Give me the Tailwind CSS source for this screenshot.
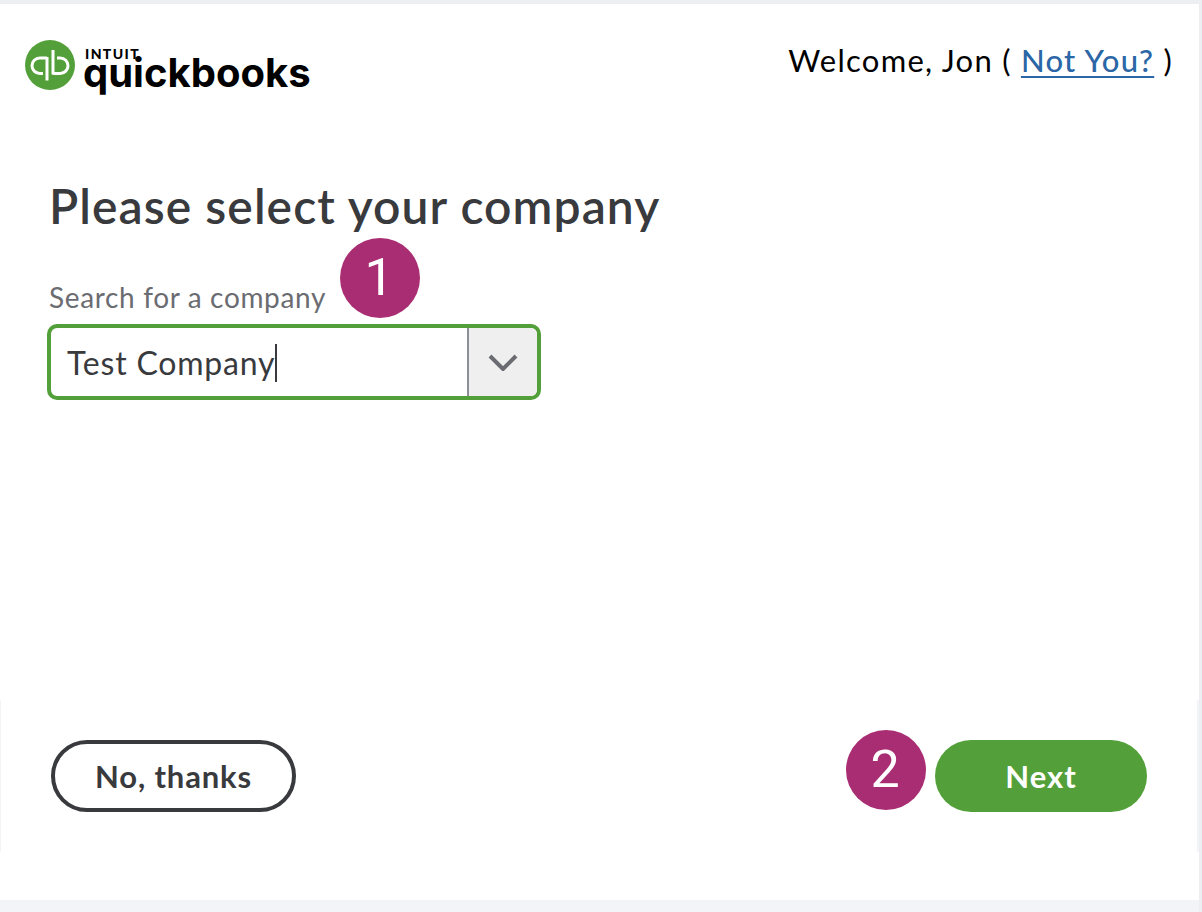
<!DOCTYPE html>
<html lang="en">
<head>
  <meta charset="UTF-8">
  <title>Select company</title>
  <script src="https://cdn.jsdelivr.net/npm/@tailwindcss/browser@4"></script>
</head>
<body class="bg-[#f3f4f8] h-[912px] overflow-hidden border-t-[4px] border-r-[3px] border-[#eceef2] font-['Lato',sans-serif]">
  <main class="relative bg-white h-[896px] flex flex-col">

    <!-- Header -->
    <header class="flex justify-between h-[100px]">
      <div class="flex ml-[25px] mt-[36px] h-[60px]">
        <svg width="50" height="50" viewBox="0 0 50 50" class="shrink-0">
          <circle cx="25" cy="25" r="25" fill="#53a03a"/>
          <path d="M22 18h-7.300a7.700 7.700 0 0 0 0 15.400h3.300" fill="none" stroke="#fff" stroke-width="3"/>
          <path d="M22 17v23.500" fill="none" stroke="#fff" stroke-width="3"/>
          <path d="M28 33.400h7.300a7.700 7.700 0 0 0 0-15.400h-3.300" fill="none" stroke="#fff" stroke-width="3"/>
          <path d="M28 10v24.500" fill="none" stroke="#fff" stroke-width="3"/>
        </svg>
        <div class="ml-[8px] text-black">
          <div class="text-[14px] leading-[11px] font-black tracking-[1.4px] ml-[2px] mt-[8px]">INTUIT</div>
          <div class="font-['Inter'] text-[40px] leading-[34px] font-bold -mt-[3px]">quickbooks</div>
        </div>
      </div>
      <p class="mt-[37px] mr-[26px] text-[31px] leading-[38px] text-black tracking-[1.27px]">
        Welcome, Jon ( <a href="#" class="text-[#2b66a6] underline underline-offset-[4px] decoration-2 font-medium">Not You?</a> )
      </p>
    </header>

    <!-- Form -->
    <section class="ml-[49px] mt-[72px] flex-1">
      <h1 class="text-[48px] leading-[60px] font-semibold text-[#393a3d] tracking-[1.07px]">Please select your company</h1>
      <label class="block mt-[41px] text-[28px] leading-[40px] text-[#6b6c72] tracking-[0.65px]">Search for a company</label>
      <div class="flex mt-[7px] w-[494px] h-[76px] border-[4px] border-[#53a03a] rounded-[10px] overflow-hidden -ml-[2px]">
        <div class="flex-1 flex items-center pl-[16px] pt-[2px] text-[32px] text-[#393a3d] tracking-[0.8px]">
          Test Company<span class="w-[2px] h-[38px] bg-[#393a3d]"></span>
        </div>
        <div class="w-[70px] bg-[#efefef] border-l-2 border-[#8d9096] flex items-center justify-center">
          <svg width="30" height="17" viewBox="0 0 30 17"><path d="M2 2l13 13L28 2" fill="none" stroke="#6b6c72" stroke-width="4"/></svg>
        </div>
      </div>
    </section>

    <!-- Footer buttons -->
    <footer class="flex justify-between items-center ml-[51px] mr-[52px] mb-[88px]">
      <button class="w-[245px] h-[72px] rounded-full border-[4px] border-[#393a3d] text-[31px] font-bold text-[#393a3d] tracking-[0.85px]">No, thanks</button>
      <button class="w-[212px] h-[72px] rounded-full bg-[#53a03a] text-[31px] font-bold text-white tracking-[1px]">Next</button>
    </footer>

    <!-- Step badges -->
    <div class="absolute left-[340px] top-[234px] w-[80px] h-[80px] rounded-full bg-[#a92d72] text-white text-[52px] font-['Roboto'] flex items-center justify-center pr-[2px]">1</div>
    <div class="absolute left-[846px] top-[726px] w-[80px] h-[80px] rounded-full bg-[#a92d72] text-white text-[52px] font-['Roboto'] flex items-center justify-center pr-[2px]">2</div>

    <!-- Faint window edges -->
    <div class="absolute left-0 top-[696px] w-[1px] h-[152px] bg-[#f3f4f8]"></div>
    <div class="absolute right-0 top-[696px] w-[2px] h-[152px] bg-[#f3f4f8]"></div>
  </main>
</body>
</html>
